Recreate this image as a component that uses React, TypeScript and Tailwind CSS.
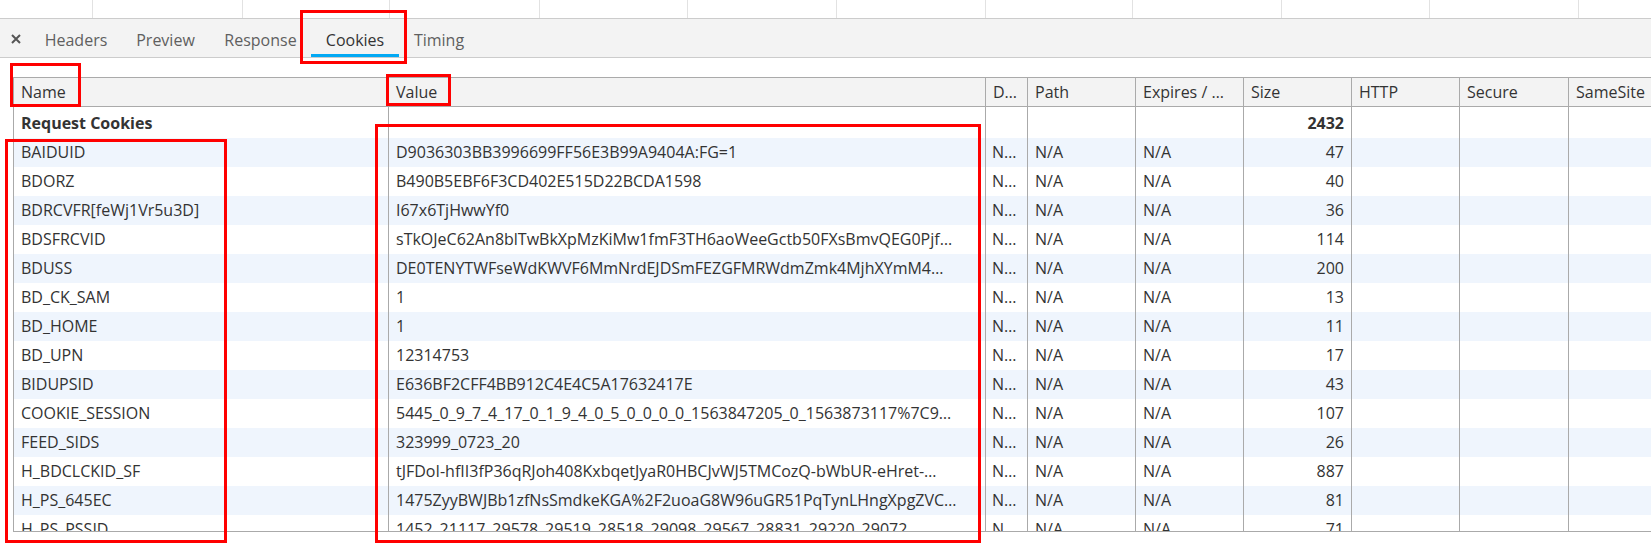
import React from 'react';

type Cookie = { name: string; value: string; size: number };

const cookies: Cookie[] = [
  { name: 'BAIDUID', value: 'D9036303BB3996699FF56E3B99A9404A:FG=1', size: 47 },
  { name: 'BDORZ', value: 'B490B5EBF6F3CD402E515D22BCDA1598', size: 40 },
  { name: 'BDRCVFR[feWj1Vr5u3D]', value: 'I67x6TjHwwYf0', size: 36 },
  { name: 'BDSFRCVID', value: 'sTkOJeC62An8blTwBkXpMzKiMw1fmF3TH6aoWeeGctb50FXsBmvQEG0Pjf…', size: 114 },
  { name: 'BDUSS', value: 'DE0TENYTWFseWdKWVF6MmNrdEJDSmFEZGFMRWdmZmk4MjhXYmM4…', size: 200 },
  { name: 'BD_CK_SAM', value: '1', size: 13 },
  { name: 'BD_HOME', value: '1', size: 11 },
  { name: 'BD_UPN', value: '12314753', size: 17 },
  { name: 'BIDUPSID', value: 'E636BF2CFF4BB912C4E4C5A17632417E', size: 43 },
  { name: 'COOKIE_SESSION', value: '5445_0_9_7_4_17_0_1_9_4_0_5_0_0_0_0_1563847205_0_1563873117%7C9…', size: 107 },
  { name: 'FEED_SIDS', value: '323999_0723_20', size: 26 },
  { name: 'H_BDCLCKID_SF', value: 'tJFDoI-hfII3fP36qRJoh408KxbqetJyaR0HBCJvWJ5TMCozQ-bWbUR-eHret-…', size: 887 },
  { name: 'H_PS_645EC', value: '1475ZyyBWJBb1zfNsSmdkeKGA%2F2uoaG8W96uGR51PqTynLHngXpgZVC…', size: 81 },
  { name: 'H_PS_PSSID', value: '1452_21117_29578_29519_28518_29098_29567_28831_29220_29072', size: 71 },
];

const cols = 'grid grid-cols-[375px_597px_42px_108px_108px_108px_108px_109px_1fr]';
const cell = 'border-r border-[#aaaaaa] px-[7px] truncate';

const stripWidths = ['w-[93px]', 'w-[150px]', 'w-[147px]', 'w-[150px]', 'w-[148px]', 'w-[149px]', 'w-[149px]', 'w-[147px]', 'w-[149px]', 'w-[148px]', 'w-[149px]'];

const tabs = [
  { label: 'Headers', w: 'w-[90px]' },
  { label: 'Preview', w: 'w-[89px]' },
  { label: 'Response', w: 'w-[101px]' },
  { label: 'Cookies', w: 'w-[88px]', active: true },
  { label: 'Timing', w: 'w-[80px]' },
];

function Mark({ className }: { className: string }) {
  return <div className={`absolute border-[3px] border-[#ff0000] pointer-events-none ${className}`} />;
}

export default function App() {
  return (
    <div className="relative w-[1651px] h-[549px] overflow-hidden bg-white font-['Open_Sans',sans-serif] text-[16px] text-[#333333]">
      {/* waterfall strip */}
      <div className="flex h-[19px] border-b border-[#cccccc]">
        {stripWidths.map((w, i) => (
          <div key={i} className={`${w} h-full border-r border-[#e2e2e2]`} />
        ))}
      </div>

      {/* tabs */}
      <div className="flex h-[39px] bg-[#f3f3f3] border-b border-[#cccccc]">
        <div className="w-[31px] flex items-center justify-center pt-[2px]">
          <svg width="10" height="10" viewBox="0 0 10 10">
            <path d="M1 1L9 9M9 1L1 9" stroke="#555" strokeWidth="2" />
          </svg>
        </div>
        {tabs.map((t) => (
          <div
            key={t.label}
            className={`${t.w} h-full flex items-center justify-center pt-[7px] border-b-[3px] ${
              t.active ? 'border-[#03a9f4] text-[#333333]' : 'border-transparent text-[#5f5f5f]'
            }`}
          >
            {t.label}
          </div>
        ))}
      </div>

      <div className="h-[19px]" />

      {/* cookie table */}
      <div className="ml-[13px] border-l border-t border-b border-[#aaaaaa]">
        <div className={`${cols} h-[29px] bg-[#f3f3f3] border-b border-[#aaaaaa] items-stretch`}>
          {['Name', 'Value', 'D…', 'Path', 'Expires / …', 'Size', 'HTTP', 'Secure', 'SameSite'].map((h, i) => (
            <div key={h} className={`${i === 8 ? 'px-[7px] truncate' : cell} flex items-center`}>
              {h}
            </div>
          ))}
        </div>

        <div className="h-[424px] overflow-hidden">
          <div className={`${cols} h-[31px] font-bold`}>
            <div className={`${cell} flex items-center`}>Request Cookies</div>
            <div className={cell} />
            <div className={cell} />
            <div className={cell} />
            <div className={cell} />
            <div className={`${cell} flex items-center justify-end`}>2432</div>
            <div className={cell} />
            <div className={cell} />
            <div />
          </div>
          {cookies.map((c, i) => (
            <div key={c.name} className={`${cols} h-[29px] ${i % 2 === 0 ? 'bg-[#eff5fd]' : 'bg-white'}`}>
              <div className={`${cell} leading-[29px]`}>{c.name}</div>
              <div className={`${cell} leading-[29px]`}>{c.value}</div>
              <div className={`${cell} leading-[29px] pl-[6px] pr-[2px]`}>N…</div>
              <div className={`${cell} leading-[29px]`}>N/A</div>
              <div className={`${cell} leading-[29px]`}>N/A</div>
              <div className={`${cell} leading-[29px] text-right`}>{c.size}</div>
              <div className={cell} />
              <div className={cell} />
              <div />
            </div>
          ))}
        </div>
      </div>

      {/* annotations */}
      <Mark className="left-[300px] top-[10px] w-[107px] h-[54px]" />
      <Mark className="left-[10px] top-[63px] w-[71px] h-[44px]" />
      <Mark className="left-[386px] top-[74px] w-[65px] h-[32px]" />
      <Mark className="left-[5px] top-[139px] w-[222px] h-[404px]" />
      <Mark className="left-[375px] top-[124px] w-[606px] h-[419px]" />
    </div>
  );
}
